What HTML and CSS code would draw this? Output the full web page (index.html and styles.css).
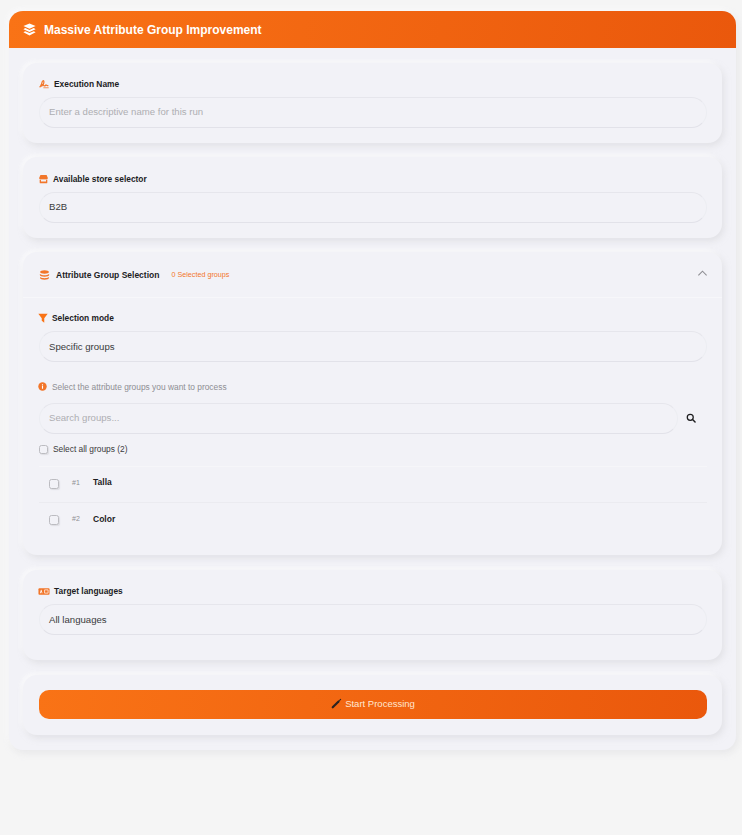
FILE: index.html
```html
<!DOCTYPE html>
<html lang="en">
<head>
<meta charset="utf-8">
<title>Massive Attribute Group Improvement</title>
<link rel="stylesheet" href="styles.css">
</head>
<body>
<main class="panel">
  <header class="panel-head">
    <svg class="ico-title" viewBox="0 0 16 16"><path fill="currentColor" d="M8 .6 15.500 3.800 8 7.200.5 3.800z"/><path fill="currentColor" d="M2.700 6.300 8 8.700l5.300-2.400 2.200 1.300L8 11 .5 7.600z"/><path fill="currentColor" d="M2.700 10 8 12.400 13.300 10l2.200 1.400L8 15.400.5 11.400z"/></svg>
    <h1>Massive Attribute Group Improvement</h1>
  </header>
  <div class="panel-body">
    <section class="card">
      <label class="field-label" for="run"><svg class="ico" viewBox="0 0 16 16"><path fill="none" stroke="currentColor" stroke-width="2" d="M1 13c2-1.500 3.500-5 4-8 .4-2.500 2.500-3 2.800-1 .4 2.500-2 7.500-4 7.500-1.500 0-.8-3 1-3 2 0 3 3 4.700 2.500 1-.3 1-2 2-1.500.8.4 1 1.200 3.500 1.200"/><path fill="none" stroke="currentColor" stroke-width="1.200" d="M7 14h8.500"/></svg>Execution Name</label>
      <input class="control" id="run" type="text" placeholder="Enter a descriptive name for this run">
    </section>
    <section class="card card-store">
      <label class="field-label" for="store"><svg class="ico ico-store" viewBox="0 0 16 16"><path fill="currentColor" d="M2.500 1h11l2.300 5.300c0 1-1 1.700-1.900 1.700H1.900C1 8 .2 7.300.2 6.300z"/><path fill="currentColor" d="M1.200 8.800h13.600V14a1.500 1.500 0 0 1-1.500 1.500H2.700A1.500 1.500 0 0 1 1.200 14z"/><path fill="#f2f2f7" d="M3.500 9.500h9v2.800h-9z"/></svg>Available store selector</label>
      <div class="control value" id="store">B2B</div>
    </section>
    <section class="card card-groups">
      <div class="groups-head">
        <svg class="ico ico-round" viewBox="0 0 16 16"><path fill="currentColor" d="M8 .5c4 0 7 1.200 7 2.700S12 6 8 6 1 4.700 1 3.200 4 .5 8 .5z"/><path fill="currentColor" d="M.6 6.300C2.500 7.800 5 8.400 8 8.400s5.500-.6 7.400-2.100V8c0 1.500-3.400 2.800-7.400 2.800S.6 9.500.6 8z"/><path fill="currentColor" d="M1 11.300c1.500 1.300 4 1.900 7 1.900s5.500-.6 7-1.900v1.500c0 1.500-3 2.700-7 2.700s-7-1.200-7-2.700z"/></svg>
        <h2>Attribute Group Selection</h2>
        <span class="count">0 Selected groups</span>
        <svg class="chev" viewBox="0 0 12 8"><path fill="none" stroke="currentColor" stroke-width="1.200" d="M1.500 6.500 6 2l4.500 4.500"/></svg>
      </div>
      <div class="groups-body">
        <label class="field-label" for="mode"><svg class="ico ico-filter" viewBox="0 0 16 16"><path fill="currentColor" d="M.5 1h15L10 8.500V15.500l-4-3v-4z"/></svg>Selection mode</label>
        <div class="control value" id="mode">Specific groups</div>
        <p class="hint"><svg class="ico-info" viewBox="0 0 16 16"><circle cx="8" cy="8" r="7.500" fill="currentColor"/><path fill="#fff" d="M7 7h2v5H7zM7 4h2v2H7z"/></svg>Select the attribute groups you want to process</p>
        <div class="search-row">
          <input class="control" type="text" placeholder="Search groups...">
          <button class="search-btn" type="button" aria-label="Search"><svg viewBox="0 0 16 16"><circle cx="6.800" cy="6.800" r="4.800" fill="none" stroke="currentColor" stroke-width="2"/><path stroke="currentColor" stroke-width="2.300" stroke-linecap="round" d="m10.500 10.500 4 4"/></svg></button>
        </div>
        <label class="select-all"><input class="check" type="checkbox">Select all groups (2)</label>
        <ul class="group-list">
          <li class="group-row"><input class="check" type="checkbox"><span class="num">#1</span><strong>Talla</strong></li>
          <li class="group-row"><input class="check" type="checkbox"><span class="num">#2</span><strong>Color</strong></li>
        </ul>
      </div>
    </section>
    <section class="card card-lang">
      <label class="field-label" for="lang"><svg class="ico ico-lang" viewBox="0 0 20 12"><rect x=".5" y=".5" width="19" height="11" rx="1.500" fill="currentColor"/><path fill="#fff" d="M3 8.800 4.700 3.200h1L7.400 8.800H6.100L5.200 6 4.300 8.800z"/><path fill="none" stroke="#fff" stroke-width="1.200" d="M11 3.200h6v5.600h-6z"/></svg>Target languages</label>
      <div class="control value" id="lang">All languages</div>
    </section>
    <section class="card card-action">
      <button class="start" type="button"><svg viewBox="0 0 16 16"><path stroke="#2b2320" stroke-width="3.200" stroke-linecap="round" d="M2.500 13.500 11 5"/><path stroke="#2b2320" stroke-width="1.600" stroke-linecap="round" d="m12.500 3.500 1.500-1.500"/></svg>Start Processing</button>
    </section>
  </div>
</main>
</body>
</html>
```
FILE: styles.css
```css
* { box-sizing: border-box; }
html, body { margin: 0; min-height: 100%; }
body {
  padding: 11px 6px 0 9px;
  height: 835px;
  overflow: hidden;
  background: #f5f5f5;
  font-family: "Liberation Sans", Arial, sans-serif;
  color: #1d1d1f;
}
.panel {
  background: #f2f2f7;
  border-radius: 14px;
  overflow: hidden;
  box-shadow: 2px 3px 7px rgba(209, 209, 214, .4), -2px -2px 6px rgba(255, 255, 255, .7);
  height: 739px;
}
.panel-head {
  height: 37px;
  display: flex;
  align-items: center;
  gap: 8px;
  padding-left: 14px;
  background: linear-gradient(100deg, #f97316, #ea580c);
  color: #fff;
}
.panel-head h1 { margin: 0; font-size: 12px; font-weight: 700; line-height: 1; }
.ico-title { width: 13px; height: 13px; flex: none; }
.panel-body { padding: 15px 14px 0; display: flex; flex-direction: column; gap: 14px; }
.card {
  background: #f2f2f7;
  border-radius: 14px;
  padding: 16px 15px 16px 16px;
  box-shadow: 2px 3px 6px rgba(209, 209, 214, .5), -2px -2px 5px rgba(255, 255, 255, .75);
  height: 80px;
}
.card-store { height: 81px; padding-top: 17px; }
.card-store .control { padding-bottom: 2px; }
.field-label {
  display: flex;
  align-items: center;
  height: 10px;
  margin: 0 0 8px;
  font-size: 8.400px;
  font-weight: 700;
  color: #1d1d1f;
}
.ico { width: 10px; height: 10px; margin-right: 5px; color: #f2762a; flex: none; }
.ico-store { width: 9px; }
.ico-filter { width: 10px; margin: 0 4px 0 -1px; color: #f97316; }
.ico-lang { width: 12px; height: 7px; margin: 0 4px 0 -1px; }
.control {
  display: flex;
  align-items: center;
  width: 100%;
  height: 31px;
  padding: 0 9px;
  outline: 0;
  border: 1px solid #ecedf2;
  border-top-color: #e6e6ec;
  border-bottom-color: #e2e2e9;
  border-radius: 16px;
  background: #f2f2f7;
  font: 400 9.600px "Liberation Sans", Arial, sans-serif;
  color: #3a3a3c;
}
input.control { padding-bottom: 2px; }
.control::placeholder { color: #aeaeb2; opacity: 1; }
.card-groups { height: 303px; padding: 0; }
.groups-head {
  height: 46px;
  display: flex;
  align-items: center;
  padding: 0 14px 0 16px;
  border-bottom: 1px solid #f7f7fa;
}
.groups-head h2 { margin: 0 0 0 6.500px; font-size: 8.500px; font-weight: 700; }
.ico-round { width: 11px; margin: 0 0 0 -.5px; }
.count { margin-left: 12px; font-size: 7.200px; color: #f2762a; }
.chev { width: 11px; height: 8px; margin: -3px 0 0 auto; color: #8e8e93; }
.groups-body { padding: 15px 15px 0 16px; }
.hint {
  display: flex;
  align-items: center;
  gap: 5px;
  margin: 19px 0 11px;
  height: 11px;
  font-size: 8.400px;
  color: #8e8e93;
}
.ico-info { width: 9px; height: 9px; margin-left: -1px; color: #f2762a; flex: none; }
.search-row { display: flex; align-items: center; }
.search-row .control { flex: 1; }
.search-btn {
  width: 29px;
  height: 29px;
  flex: none;
  display: flex;
  align-items: center;
  justify-content: flex-start;
  padding: 0 0 2px 8px;
  border: 0;
  background: none;
  color: #1d1d1f;
}
.search-btn svg { width: 10px; height: 10px; }
.select-all {
  display: flex;
  align-items: center;
  gap: 5px;
  height: 12px;
  margin-top: 9px;
  font-size: 8.400px;
  color: #3a3a3c;
}
.check {
  appearance: none;
  width: 9px;
  height: 9px;
  margin: 0;
  flex: none;
  border-radius: 2.500px;
  background: #f2f2f7;
  border: 1px solid #bcbcc1;
  box-shadow: 1px 1px 1px rgba(209, 209, 214, .6);
}
.group-list { list-style: none; margin: 11px 0 0; padding: 0; }
.group-row {
  height: 36px;
  display: flex;
  align-items: center;
  padding-left: 10px;
  border-top: 1px solid #f6f6f9;
}
.group-row + .group-row { height: 37px; border-top: 1px solid #ebebf0; }
.group-row .check { width: 10px; height: 10px; margin-top: -2px; }
.num { width: 21px; margin: -5px 0 0 13px; font-size: 7px; color: #8e8e93; }
.group-row strong { margin-top: -5px; font-size: 8.500px; font-weight: 700; }
.card-lang { height: 90px; margin-top: 1px; }
.card-action { height: 60px; margin-top: 1px; padding: 15px 15px 15px 16px; }
.start {
  width: 100%;
  height: 29px;
  display: flex;
  align-items: center;
  justify-content: center;
  gap: 3px;
  padding: 0 0 2px;
  border: 0;
  border-radius: 10px;
  background: linear-gradient(100deg, #f97316, #ea580c);
  color: #ffe6d2;
  font: 400 9.500px "Liberation Sans", Arial, sans-serif;
}
.start svg { width: 11px; height: 11px; }
```
